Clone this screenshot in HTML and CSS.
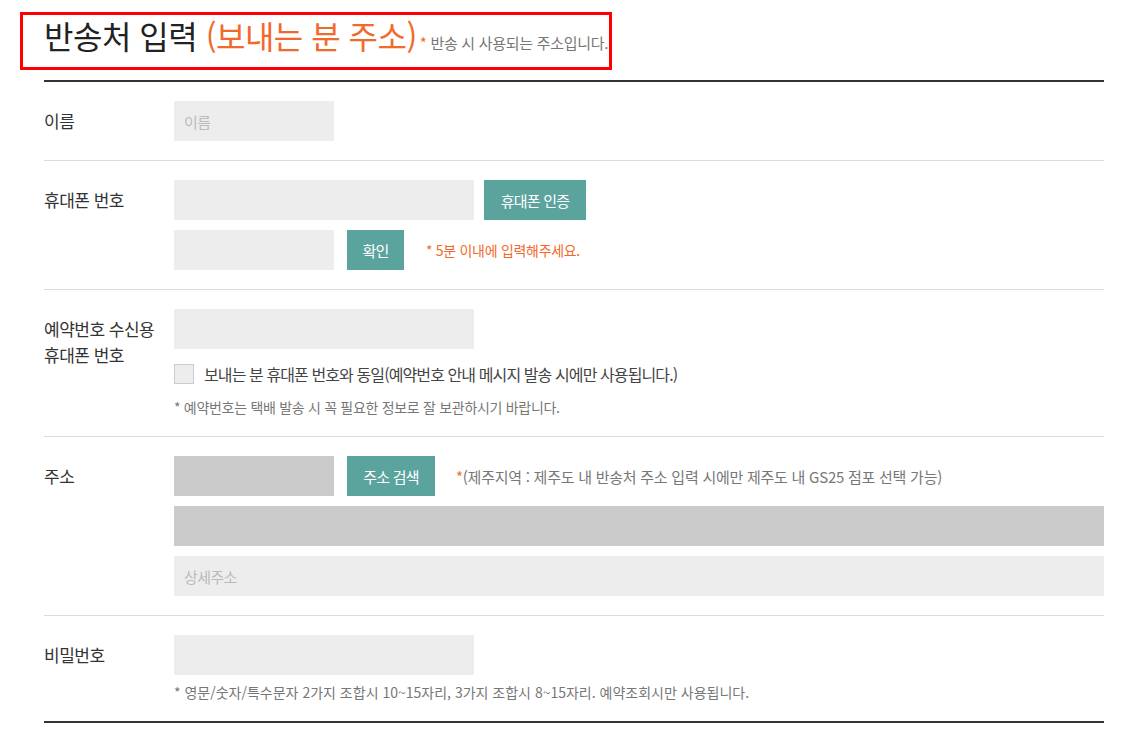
FILE: index.html
```html
<!DOCTYPE html>
<html lang="ko">
<head>
<meta charset="utf-8">
<link rel="stylesheet" href="styles.css">
</head>
<body>
<div class="page">
  <div class="head-box">
    <h2 class="title">반송처 입력 <span class="title-accent">(보내는 분 주소)</span></h2>
    <span class="head-note"><span class="star">*</span> 반송 시 사용되는 주소입니다.</span>
  </div>
  <div class="form">
    <div class="row">
      <div class="label">이름</div>
      <div class="fields">
        <div class="line"><div class="input w160"><span class="ph">이름</span></div></div>
      </div>
    </div>
    <div class="row">
      <div class="label">휴대폰 번호</div>
      <div class="fields">
        <div class="line"><div class="input w300"></div><button class="btn btn-cert">휴대폰 인증</button></div>
        <div class="line"><div class="input w160"></div><button class="btn btn-ok">확인</button><span class="warn">* 5분 이내에 입력해주세요.</span></div>
      </div>
    </div>
    <div class="row">
      <div class="label">예약번호 수신용<br>휴대폰 번호</div>
      <div class="fields">
        <div class="line"><div class="input w300"></div></div>
        <label class="check"><span class="box"></span><span class="check-text">보내는 분 휴대폰 번호와 동일(예약번호 안내 메시지 발송 시에만 사용됩니다.)</span></label>
        <p class="note">* 예약번호는 택배 발송 시 꼭 필요한 정보로 잘 보관하시기 바랍니다.</p>
      </div>
    </div>
    <div class="row">
      <div class="label">주소</div>
      <div class="fields">
        <div class="line"><div class="input w160 dark"></div><button class="btn btn-search">주소 검색</button><span class="info"><span class="star">*</span>(제주지역 : 제주도 내 반송처 주소 입력 시에만 제주도 내 GS25 점포 선택 가능)</span></div>
        <div class="line"><div class="input full dark"></div></div>
        <div class="line"><div class="input full"><span class="ph">상세주소</span></div></div>
      </div>
    </div>
    <div class="row last">
      <div class="label">비밀번호</div>
      <div class="fields">
        <div class="line"><div class="input w300"></div></div>
        <p class="note pw">* 영문/숫자/특수문자 2가지 조합시 10~15자리, 3가지 조합시 8~15자리. 예약조회시만 사용됩니다.</p>
      </div>
    </div>
  </div>
</div>
</body>
</html>
```

FILE: styles.css
```css
* { box-sizing: border-box; }
html, body { margin: 0; padding: 0; background: #fff; }
body {
  font-family: "Noto Sans CJK KR", "Noto Sans", sans-serif;
  color: #333;
}
.page { padding: 12px 25px 0 20px; width: 1129px; }
.head-box {
  width: 592px;
  height: 58px;
  border: 3px solid #f00;
  display: flex;
  align-items: baseline;
  padding: 0 0 0 21px;
}
.title {
  margin: 0;
  font-size: 32px;
  font-weight: 400;
  color: #222;
  letter-spacing: -0.5px;
  line-height: 40px;
}
.title-accent { color: #f26a2b; }
.head-note {
  font-size: 15px;
  color: #777;
  letter-spacing: -0.3px;
  margin-left: 3px;
}
.star { color: #f26a2b; }
.form {
  margin: 10px 0 0 24px;
  width: 1060px;
  border-top: 2px solid #333;
  border-bottom: 2px solid #333;
}
.row {
  display: flex;
  padding: 19px 0 19px;
  border-bottom: 1px solid #ddd;
}
.row.last { border-bottom: none; }
.label {
  width: 130px;
  flex: none;
  font-size: 17px;
  line-height: 26px;
  padding-top: 7px;
  color: #333;
  letter-spacing: -0.5px;
}
.fields { flex: 1; display: flex; flex-direction: column; gap: 10px; }
.line { display: flex; align-items: center; }
.input {
  height: 40px;
  background: #ededed;
  display: flex;
  align-items: center;
  padding-left: 10px;
}
.input.dark { background: #cbcbcb; }
.w160 { width: 160px; }
.w300 { width: 300px; }
.full { width: 930px; }
.ph { color: #bbb; font-size: 15px; letter-spacing: -0.6px; }
.btn {
  height: 40px;
  border: 0;
  background: #5ba49e;
  color: #fff;
  font-family: inherit;
  font-size: 15px;
  letter-spacing: -0.8px;
  padding: 0;
}
.btn-cert { width: 102px; margin-left: 10px; }
.btn-ok { width: 57px; margin-left: 13px; }
.btn-search { width: 88px; margin-left: 13px; }
.warn { color: #f26a2b; font-size: 14px; margin-left: 22px; letter-spacing: -0.3px; }
.info { color: #777; font-size: 15px; margin-left: 21px; letter-spacing: -0.25px; }
.check { display: flex; align-items: center; margin-top: 2px; height: 26px; }
.box {
  width: 20px; height: 20px;
  background: #ededed;
  border: 1px solid #ccc;
  margin-right: 10px;
}
.check-text { font-size: 16px; color: #444; letter-spacing: -0.9px; line-height: 26px; }
.note {
  margin: 0;
  font-size: 14px;
  line-height: 20px;
  color: #777;
  letter-spacing: -0.3px;
}
.note.pw { margin-top: -3px; letter-spacing: 0; }
```
